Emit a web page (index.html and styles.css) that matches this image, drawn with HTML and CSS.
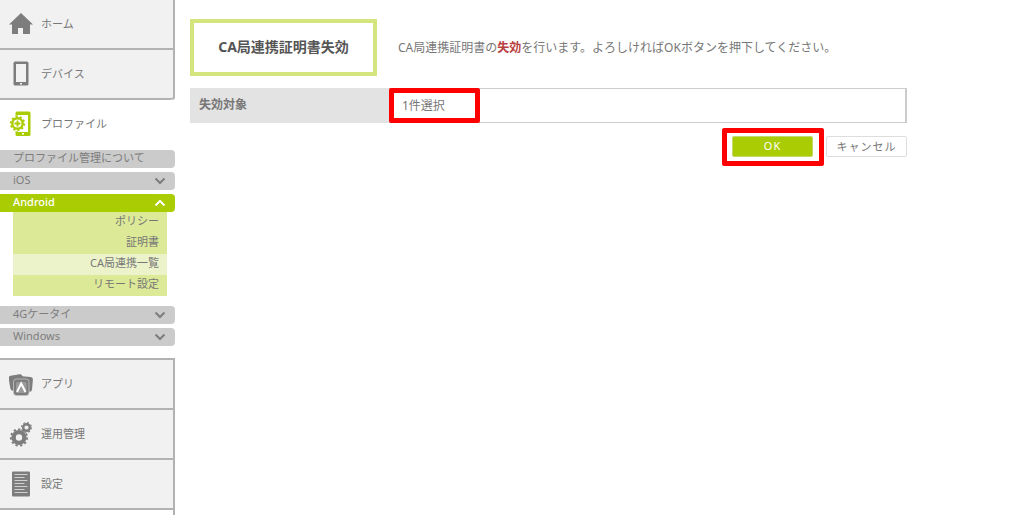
FILE: index.html
```html
<!DOCTYPE html>
<html lang="ja">
<head>
    <meta charset="UTF-8">
    <meta name="viewport" content="width=device-width, initial-scale=1.0">
    <title>CA局連携証明書失効</title>
    <link rel="stylesheet" href="styles.css">
</head>
<body>
    <div class="layout">
        <nav class="sidebar">
            <div class="menu-block menu-block-top">
                <a class="menu-item" href="#">
                    <svg class="menu-icon" viewBox="0 0 24 26"><path fill="#7d7d7d" d="M12 2L0 13.500h3V23h6v-6h5v6h7v-9.500h3z"/></svg>
                    <span>ホーム</span>
                </a>
                <a class="menu-item" href="#">
                    <svg class="menu-icon" viewBox="0 0 24 26"><path fill="#7d7d7d" fill-rule="evenodd" d="M6 0.500h12q1.500 0 1.500 1.500v21q0 1.500-1.500 1.500H6q-1.500 0-1.500-1.500V2q0-1.500 1.500-1.500zM7 3v18h10V3zM11 22v1.500h2V22z"/></svg>
                    <span>デバイス</span>
                </a>
            </div>
            <a class="menu-item menu-current" href="#">
                <svg class="menu-icon" viewBox="0 0 24 26">
                    <path fill="#aacc03" fill-rule="evenodd" d="M8 0.500h12q1.500 0 1.500 1.500v21.500q0 1.500-1.500 1.500H8q-1.500 0-1.500-1.500V2q0-1.500 1.500-1.500zM9 4v17h10V4zM13 22v1.500h2V22z"/>
                    <circle cx="8.500" cy="12.500" r="8" fill="#fff"/>
                    <circle cx="8.500" cy="12.500" r="5.200" fill="none" stroke="#aacc03" stroke-width="2.400"/>
                    <circle cx="8.500" cy="12.500" r="6.800" fill="none" stroke="#aacc03" stroke-width="1.800" stroke-dasharray="2.136"/>
                    <path d="M8.500 9.500v6M5.500 12.500h6" stroke="#aacc03" stroke-width="1.800"/>
                </svg>
                <span>プロファイル</span>
            </a>
            <div class="submenu">
                <a class="bar" href="#">プロファイル管理について</a>
                <button class="bar" type="button">iOS<svg class="arrow" viewBox="0 0 12 8"><path d="M1.500 1.500L6 6l4.500-4.500"/></svg></button>
                <div>
                    <button class="bar bar-open" type="button">Android<svg class="arrow" viewBox="0 0 12 8"><path d="M1.500 6.500L6 2l4.500 4.500"/></svg></button>
                    <ul class="sub-list">
                        <li><a href="#">ポリシー</a></li>
                        <li><a href="#">証明書</a></li>
                        <li><a class="active" href="#">CA局連携一覧</a></li>
                        <li><a href="#">リモート設定</a></li>
                    </ul>
                </div>
                <button class="bar" type="button">4Gケータイ<svg class="arrow" viewBox="0 0 12 8"><path d="M1.500 1.500L6 6l4.500-4.500"/></svg></button>
                <button class="bar" type="button">Windows<svg class="arrow" viewBox="0 0 12 8"><path d="M1.500 1.500L6 6l4.500-4.500"/></svg></button>
            </div>
            <div class="menu-block menu-block-bottom">
                <a class="menu-item" href="#">
                    <svg class="menu-icon" viewBox="0 0 24 26">
                        <g fill="#7d7d7d">
                            <rect x="0.500" y="4" width="14" height="15" rx="2.500" transform="rotate(-10 7 12)"/>
                            <rect x="10" y="5.500" width="13.500" height="15" rx="2.500" transform="rotate(5 17 13)"/>
                            <rect x="4.500" y="8" width="15.500" height="16.500" rx="3" stroke="#c4c4c4" stroke-width="0.800"/>
                        </g>
                        <rect x="7" y="11" width="10.500" height="11" rx="1.500" fill="#9b9b9b"/>
                        <path d="M8 21l4.200-8.500L16.500 21" fill="none" stroke="#fff" stroke-width="2"/>
                    </svg>
                    <span>アプリ</span>
                </a>
                <a class="menu-item" href="#">
                    <svg class="menu-icon" viewBox="0 0 24 26" fill="none" stroke="#7d7d7d">
                        <circle cx="10" cy="16.500" r="5.400" stroke-width="4.400"/>
                        <circle cx="10" cy="16.500" r="8.200" stroke-width="1.800" stroke-dasharray="2.342"/>
                        <circle cx="17.500" cy="6.500" r="3.300" stroke-width="2.400"/>
                        <circle cx="17.500" cy="6.500" r="4.900" stroke-width="1.200" stroke-dasharray="1.924"/>
                    </svg>
                    <span>運用管理</span>
                </a>
                <a class="menu-item" href="#">
                    <svg class="menu-icon" viewBox="0 0 24 26">
                        <rect x="3" y="0.500" width="18" height="25" rx="1" fill="#7d7d7d"/>
                        <path d="M5.500 3.500h13M5.500 6.500h10M5.500 9.500h13M5.500 12.500h10M5.500 15.500h13M5.500 18.500h10M5.500 21.500h13" stroke="#d0d0d0" stroke-width="1"/>
                    </svg>
                    <span>設定</span>
                </a>
                <div class="menu-rest"></div>
            </div>
        </nav>

        <main class="content">
            <header class="page-head">
                <h1>CA局連携証明書失効</h1>
                <p>CA局連携証明書の<strong>失効</strong>を行います。よろしければOKボタンを押下してください。</p>
            </header>
            <table class="target-table">
                <tr>
                    <th scope="row">失効対象</th>
                    <td><div class="marked"><span>1件選択</span><i class="mark mark-value"></i></div></td>
                </tr>
            </table>
            <div class="actions">
                <div class="marked">
                    <button class="btn btn-ok" type="button">OK</button>
                    <i class="mark mark-ok"></i>
                </div>
                <button class="btn" type="button">キャンセル</button>
            </div>
        </main>
    </div>
</body>
</html>
```

FILE: styles.css
```css
* { box-sizing: border-box; }
body { margin: 0; background-color: #fff; color: #777; font-family: "Noto Sans", "Noto Sans CJK JP", sans-serif; font-size: 11px; line-height: 18px; }
a { color: inherit; text-decoration: none; }
button { font-family: inherit; cursor: pointer; }

.layout { display: flex; height: 100vh; overflow: hidden; }

/* sidebar */
.sidebar { flex: 0 0 175px; display: flex; flex-direction: column; }
.menu-block { background-color: #f1f1f1; border-right: 2px solid #b2b2b2; }
.menu-block-top { border-radius: 0 0 3px 0; }
.menu-block-top .menu-item:last-child { border-radius: 0 0 3px 0; }
.menu-block-bottom { flex: 1; display: flex; flex-direction: column; margin-top: 12px; border-top: 2px solid #b2b2b2; }
.menu-item { display: flex; align-items: center; gap: 8px; height: 50px; padding: 0 9px; border-bottom: 2px solid #b2b2b2; flex-shrink: 0; }
.menu-current { padding-bottom: 2px; border-bottom: none; }
.menu-icon { width: 24px; height: 26px; flex-shrink: 0; }
.menu-rest { flex: 1; background-color: #fff; }

.submenu { display: flex; flex-direction: column; gap: 4px; }
.bar { display: flex; align-items: center; justify-content: space-between; width: 100%; height: 18px; padding: 0 9px 2px 13px; border: none; border-radius: 0 4px 4px 0; background-color: #cbcbcb; color: #7d7d7d; font-size: 11px; line-height: 16px; }
.bar-open { background-color: #aacc03; color: #fff; font-weight: 500; }
.arrow { width: 12px; height: 8px; margin-top: 2px; fill: none; stroke: #7d7d7d; stroke-width: 2; }
.bar-open .arrow { stroke: #fff; }
.sub-list { margin: 0 8px 6px 13px; padding: 0; list-style: none; background-color: #dcea98; text-align: right; }
.sub-list a { display: block; height: 21px; padding-right: 8px; line-height: 17px; }
.sub-list .active { background-color: #ecf3cb; }

/* content */
.content { flex: 1; max-width: 732px; padding: 19px 0 0 15px; }
.page-head { display: flex; align-items: center; gap: 21px; margin-bottom: 12px; }
.page-head h1 { flex: 0 0 187px; margin: 0; padding: 15px 0 16px; border: 4px solid #d5e57e; color: #555; font-size: 14px; line-height: 18px; text-align: center; }
.page-head p { margin: 0; font-size: 12px; white-space: nowrap; }
.page-head strong { color: #b84040; }

.target-table { width: 100%; border-collapse: separate; border-spacing: 0; font-size: 12px; }
.target-table th { width: 199px; height: 35px; padding: 0 9px 2px; background-color: #e3e3e3; text-align: left; }
.target-table td { padding: 0 13px; border: 1px solid #ccc; border-right-width: 2px; border-left: none; }
.target-table td .marked { display: inline-block; }

.actions { display: flex; justify-content: flex-end; gap: 13px; margin-top: 13px; }
.btn { display: block; width: 81px; height: 21px; padding: 0 0 2px; border: 1px solid #ddd; border-radius: 2px; background-color: #fff; color: #777; font-size: 11px; letter-spacing: 1px; }
.btn-ok { border-color: #c5d86a; background-color: #aacc03; color: #fff; }

/* red callout frames */
.marked { position: relative; }
.mark { position: absolute; border: 5px solid #f00; border-radius: 2px; }
.mark-value { top: -9px; left: -13px; width: 91px; height: 35px; }
.mark-ok { top: -8px; left: -10px; width: 102px; height: 38px; pointer-events: none; }
```
